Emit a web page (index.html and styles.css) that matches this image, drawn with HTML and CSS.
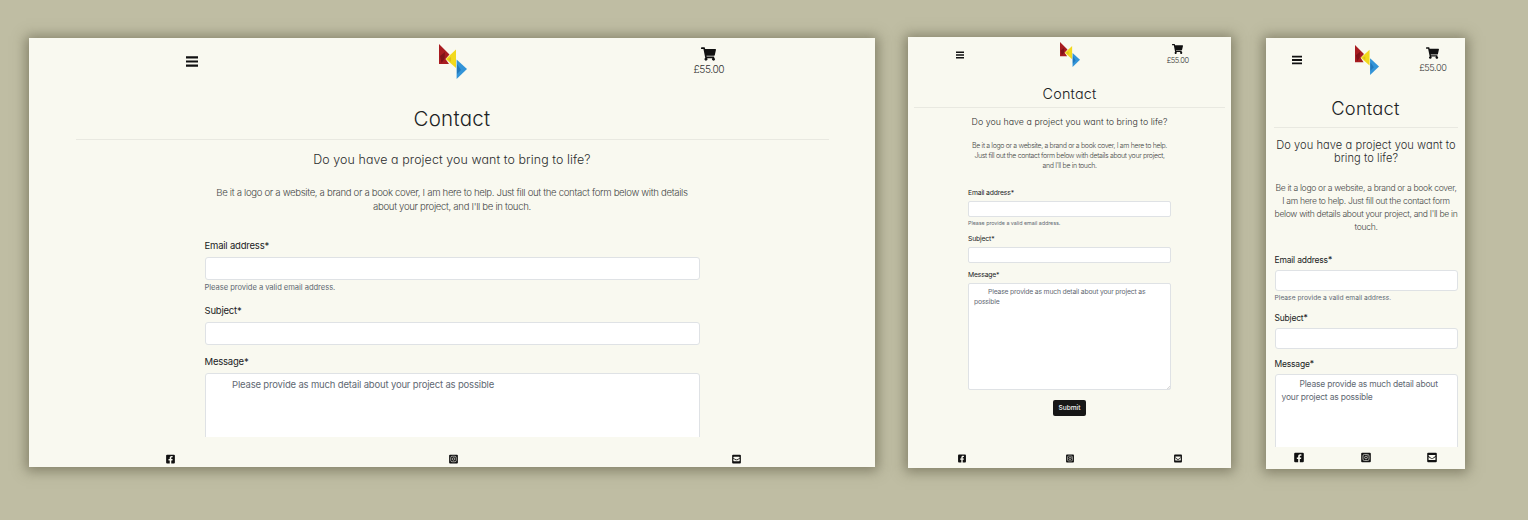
FILE: index.html
```html
<!DOCTYPE html>
<html lang="en">
<head>
<meta charset="utf-8">
<title>Contact</title>
<link rel="stylesheet" href="styles.css">
</head>
<body>
<svg class="defs" aria-hidden="true">
  <symbol id="bars" viewBox="0 0 12 11"><path d="M0 .3h12v2.2H0zM0 4.4h12v2.2H0zM0 8.5h12v2.2H0z"/></symbol>
  <symbol id="logo" viewBox="0 0 28 35"><path fill="#a81c20" d="M0 0l10.500 10.500L6.500 15l3.500 5H0z"/><path fill="#7f1218" d="M1 12l5-4-.5 7-3 4z"/><path fill="#f2d91d" d="M17 5.500v18.500L6.800 15z"/><path fill="#dcbf1c" d="M9 15l3-2v5z"/><path fill="#3294d8" d="M17.600 15.500L28 25 17.600 35z"/><path fill="#2278bb" d="M18 20l4 6-4 4z"/></symbol>
  <symbol id="cart" viewBox="0 0 576 512"><path d="M528 301l47-208c4-15-8-29-23-29H159l-9-45C148 8 138 0 126 0H24C11 0 0 11 0 24v16c0 13 11 24 24 24h70l70 343a56 56 0 1 0 67 9h210a56 56 0 1 0 64-10l5-25c4-15-8-30-23-30H218l-7-32h294c11 0 21-8 23-18z"/></symbol>
  <symbol id="facebook" viewBox="0 0 448 512"><path d="M400 32H48A48 48 0 0 0 0 80v352a48 48 0 0 0 48 48h137V328h-63v-72h63v-55c0-62 37-97 94-97 27 0 55 5 55 5v61h-31c-31 0-40 19-40 39v47h69l-11 72h-58v152h137a48 48 0 0 0 48-48V80a48 48 0 0 0-48-48z"/></symbol>
  <symbol id="instagram" viewBox="0 0 448 512"><rect y="32" width="448" height="448" rx="48"/><g fill="none" stroke="#f9f9f0" stroke-width="30"><rect x="82" y="114" width="284" height="284" rx="70"/><circle cx="224" cy="256" r="64"/></g><circle cx="300" cy="180" r="18" fill="#f9f9f0"/></symbol>
  <symbol id="mail" viewBox="0 0 448 512"><rect y="32" width="448" height="448" rx="48"/><path fill="#f9f9f0" d="M88 140h272a24 24 0 0 1 24 24v24c-20 16-60 46-120 86-22 15-58 15-80 0-60-40-100-70-120-86v-24a24 24 0 0 1 24-24zM64 232c25 18 60 44 103 74 34 24 80 24 114 0 43-30 78-56 103-74v116a24 24 0 0 1-24 24H88a24 24 0 0 1-24-24z"/></symbol>
</svg>

<main class="showcase">
  <section class="screen desktop">
    <header class="bar">
      <svg class="menu"><use href="#bars"/></svg>
      <svg class="logo"><use href="#logo"/></svg>
      <div class="cart"><svg><use href="#cart"/></svg><span>£55.00</span></div>
    </header>
    <div class="content">
      <h1>Contact</h1>
      <hr>
      <h2>Do you have a project you want to bring to life?</h2>
      <p class="intro">Be it a logo or a website, a brand or a book cover, I am here to help. Just fill out the contact form below with details<br>about your project, and I'll be in touch.</p>
      <form class="form">
        <div class="label email">Email address*</div>
        <div class="field"></div>
        <div class="help">Please provide a valid email address.</div>
        <div class="label subject">Subject*</div>
        <div class="field"></div>
        <div class="label message">Message*</div>
        <div class="area">Please provide as much detail about your project as possible</div>
      </form>
    </div>
    <footer class="social"><svg><use href="#facebook"/></svg><svg><use href="#instagram"/></svg><svg><use href="#mail"/></svg></footer>
  </section>

  <section class="screen tablet">
    <header class="bar">
      <svg class="menu"><use href="#bars"/></svg>
      <svg class="logo"><use href="#logo"/></svg>
      <div class="cart"><svg><use href="#cart"/></svg><span>£55.00</span></div>
    </header>
    <div class="content">
      <h1>Contact</h1>
      <hr>
      <h2>Do you have a project you want to bring to life?</h2>
      <p class="intro">Be it a logo or a website, a brand or a book cover, I am here to help.<br>Just fill out the contact form below with details about your project,<br>and I'll be in touch.</p>
      <form class="form">
        <div class="label email">Email address*</div>
        <div class="field"></div>
        <div class="help">Please provide a valid email address.</div>
        <div class="label subject">Subject*</div>
        <div class="field"></div>
        <div class="label message">Message*</div>
        <div class="area">Please provide as much detail about your project as<br>possible<svg class="grip" viewBox="0 0 4 4"><path d="M0 4L4 0M2 4l2-2"/></svg></div>
        <button class="submit" type="button">Submit</button>
      </form>
    </div>
    <footer class="social"><svg><use href="#facebook"/></svg><svg><use href="#instagram"/></svg><svg><use href="#mail"/></svg></footer>
  </section>

  <section class="screen mobile">
    <header class="bar">
      <svg class="menu"><use href="#bars"/></svg>
      <svg class="logo"><use href="#logo"/></svg>
      <div class="cart"><svg><use href="#cart"/></svg><span>£55.00</span></div>
    </header>
    <div class="content">
      <h1>Contact</h1>
      <hr>
      <h2>Do you have a project you want to<br>bring to life?</h2>
      <p class="intro">Be it a logo or a website, a brand or a book cover,<br>I am here to help. Just fill out the contact form<br>below with details about your project, and I'll be in<br>touch.</p>
      <form class="form">
        <div class="label email">Email address*</div>
        <div class="field"></div>
        <div class="help">Please provide a valid email address.</div>
        <div class="label subject">Subject*</div>
        <div class="field"></div>
        <div class="label message">Message*</div>
        <div class="area">Please provide as much detail about<br>your project as possible</div>
      </form>
    </div>
    <footer class="social"><svg><use href="#facebook"/></svg><svg><use href="#instagram"/></svg><svg><use href="#mail"/></svg></footer>
  </section>
</main>
</body>
</html>
```
FILE: styles.css
```css
* { box-sizing: border-box; }
body { margin: 0; height: 520px; overflow: hidden; background: #bfbda3; font-family: Inter, "Noto Sans", sans-serif; color: #202224; }
.defs { width: 0; height: 0; position: absolute; }
.showcase { display: flex; align-items: flex-start; padding: 37px 0 0 29px; height: 520px; }
.screen { display: flex; flex-direction: column; flex: none; background: #f9f9f0; box-shadow: 0 1px 12px 3px rgba(88, 85, 62, .58); white-space: nowrap; }
.desktop { width: 846px; height: 429px; margin-top: 1px; }
.tablet { width: 323px; height: 431px; margin-left: 33px; }
.mobile { width: 199px; height: 431px; margin-left: 35px; margin-top: 1px; }
svg { fill: #111; display: block; }

.bar { display: grid; grid-template-columns: repeat(3, 1fr); justify-items: center; align-items: start; flex: none; }
.cart { display: flex; flex-direction: column; align-items: center; font-weight: 300; color: #333; }
.content { flex: 1; min-height: 0; overflow: hidden; display: flex; flex-direction: column; }
h1, h2, p { margin: 0; text-align: center; font-weight: 300; }
h1, h2 { font-feature-settings: "cv11"; }
h1, h2, .intro, .form, hr { flex: none; }
h2 { color: #2b2c2d; }
hr { border: 0; border-top: 1px solid #e9e9e1; height: 1px; }
.intro { color: #464847; }
.field, .area { background: #fff; border: 1px solid #dfe2e5; border-radius: 3px; }
.area, .help { color: #5f6973; }
.area { position: relative; }
.social { display: grid; grid-template-columns: repeat(3, 1fr); justify-items: center; flex: none; }
.grip { position: absolute; right: 0; bottom: 0; width: 3px; height: 3px; stroke: #999; stroke-width: .5; }

.desktop .bar { height: 62px; padding: 0 37px 0 34px; }
.desktop .menu { width: 12px; height: 11px; margin-top: 18px; }
.desktop .logo { width: 28px; height: 35px; margin: 6px 0 0 6px; }
.desktop .cart { margin-top: 9px; font-size: 10.2px; line-height: 14px; letter-spacing: -.45px; }
.desktop .cart svg { width: 15px; height: 14px; margin-bottom: 1px; }
.desktop h1 { margin-top: 4px; font-size: 20.5px; line-height: 30px; letter-spacing: .3px; }
.desktop hr { width: 753px; margin: 5px 0 0 47px; }
.desktop h2 { margin-top: 11px; font-size: 12.4px; line-height: 17px; letter-spacing: .1px; }
.desktop .intro { margin-top: 18px; font-size: 9.6px; line-height: 14.400px; letter-spacing: -.325px; }
.desktop .form { width: 495px; margin-left: 175.500px; }
.desktop .label { font-size: 9.5px; line-height: 14px; letter-spacing: -.2px; }
.desktop .email { margin: 24px 0 4px; }
.desktop .field { height: 23px; }
.desktop .help { font-size: 7.6px; line-height: 10px; letter-spacing: -.05px; margin-top: 3px; }
.desktop .subject { margin: 11px 0 4px; }
.desktop .message { margin: 10px 0 4px; }
.desktop .area { height: 90px; padding: 4px 8px; font-size: 9.5px; line-height: 14px; letter-spacing: -.17px; text-indent: 18.500px; }
.desktop .social { height: 30px; padding-top: 17px; grid-template-columns: repeat(3, 283px); }
.desktop .social svg { width: 9px; height: 10px; }

.tablet .bar { height: 41px; }
.tablet .menu { width: 8px; height: 8px; margin: 14px 4px 0 0; }
.tablet .logo { width: 20px; height: 25px; margin: 5px 0 0 1px; }
.tablet .cart { margin: 7px 0 0 1px; font-size: 7.5px; line-height: 10px; letter-spacing: -.4px; }
.tablet .cart svg { width: 11px; height: 10px; margin-bottom: 2px; }
.tablet h1 { margin-top: 5.500px; font-size: 14.4px; line-height: 20px; letter-spacing: .2px; }
.tablet hr { width: 311px; margin: 3.500px 0 0 6px; }
.tablet h2 { margin-top: 8px; font-size: 8.800px; line-height: 12px; letter-spacing: .05px; }
.tablet .intro { margin-top: 13px; font-size: 7px; line-height: 10.200px; letter-spacing: -.35px; }
.tablet .form { width: 203px; margin-left: 60px; }
.tablet .label { font-size: 6.8px; line-height: 10px; letter-spacing: -.16px; }
.tablet .email { margin: 16.400px 0 3px; }
.tablet .field { height: 16px; border-radius: 2px; }
.tablet .help { font-size: 5.4px; line-height: 8px; letter-spacing: -.05px; margin-top: 2px; }
.tablet .subject { margin: 7px 0 3px; }
.tablet .message { margin: 7px 0 3px; }
.tablet .area { height: 107px; padding: 3px 5px; font-size: 6.8px; line-height: 10.300px; letter-spacing: -.17px; text-indent: 14px; border-radius: 2px; }
.submit { display: block; width: 33px; height: 16px; margin: 10px auto 0; padding: 0; border: 0; border-radius: 2px; background: #171717; color: #f5f5f5; font: 500 6.600px/16px Inter, sans-serif; }
.tablet .social { height: 20px; padding-top: 6px; grid-template-columns: repeat(3, 108px); }
.tablet .social svg { width: 8px; height: 9px; }

.mobile .bar { height: 56px; }
.mobile .menu { width: 10px; height: 10px; margin: 17px 4px 0 0; }
.mobile .logo { width: 24px; height: 30px; margin: 7px 0 0 3px; }
.mobile .cart { margin: 9px 0 0 2px; font-size: 9.2px; line-height: 13px; letter-spacing: -.45px; }
.mobile .cart svg { width: 13px; height: 12px; margin-bottom: 2px; }
.mobile h1 { margin-top: 1px; font-size: 18.3px; line-height: 26px; letter-spacing: .2px; }
.mobile hr { width: 184px; margin: 6px 0 0 8px; }
.mobile h2 { margin: 11px 0 0 1px; font-size: 11.1px; line-height: 13px; letter-spacing: .06px; }
.mobile .intro { margin: 17px 0 0 1px; font-size: 8.600px; line-height: 13px; letter-spacing: -.32px; }
.mobile .form { width: 183px; margin-left: 8.500px; }
.mobile .label { font-size: 8.500px; line-height: 12px; letter-spacing: -.2px; }
.mobile .email { margin: 20px 0 4px; }
.mobile .field { height: 21px; }
.mobile .help { font-size: 6.700px; line-height: 9px; margin-top: 3px; }
.mobile .subject { margin: 9px 0 4px; }
.mobile .message { margin: 9px 0 4px; }
.mobile .area { height: 90px; padding: 3px 6px; font-size: 8.500px; line-height: 13px; letter-spacing: -.2px; text-indent: 18px; }
.mobile .social { height: 22px; padding-top: 5px; grid-template-columns: repeat(3, 66.500px); }
.mobile .social svg { width: 10px; height: 11px; }
```
